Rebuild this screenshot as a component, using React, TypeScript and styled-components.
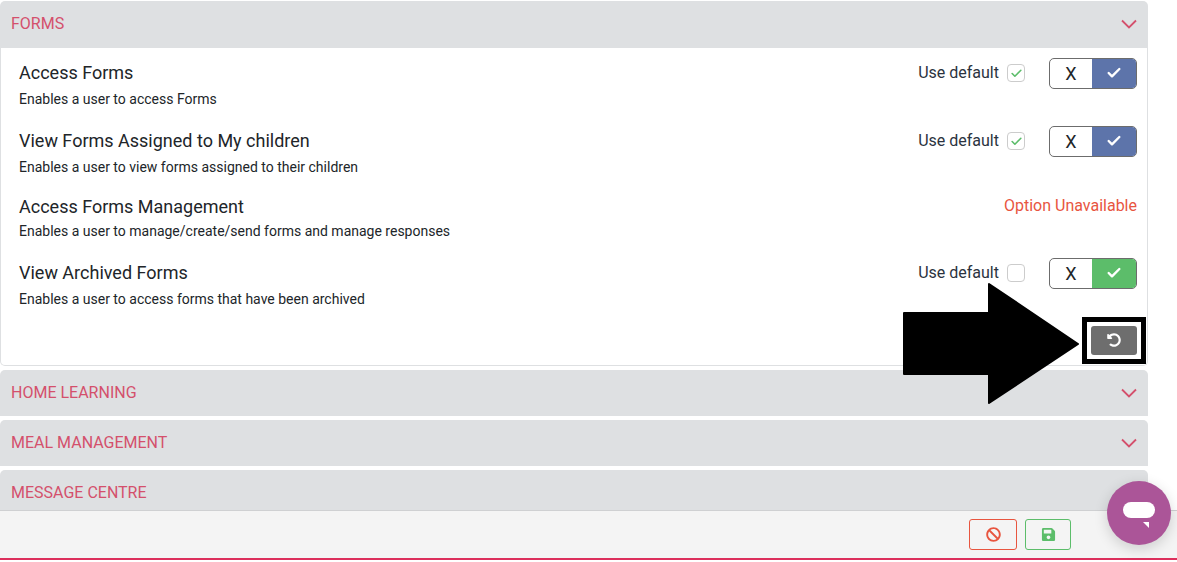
import React from "react";
import styled, { createGlobalStyle } from "styled-components";
import { FaBan, FaSave, FaUndoAlt } from "react-icons/fa";
import { Check } from "lucide-react";

const GlobalStyle = createGlobalStyle`
  html, body {
    margin: 0;
    padding: 0;
    height: 100%;
    overflow: hidden;
    background: #fff;
    font-family: Roboto, "Liberation Sans", sans-serif;
    color: #212529;
  }
`;

const Page = styled.div`
  position: relative;
  width: 1177px;
  height: 562px;
  overflow: hidden;
  display: flex;
  flex-direction: column;
`;

const Scroll = styled.div`
  flex: 1;
  min-height: 0;
  overflow: hidden;
  width: 1148px;
  padding-top: 1px;
  display: flex;
  flex-direction: column;
  gap: 4px;
`;

const Section = styled.section`
  flex: none;
`;

const Header = styled.div<{ $open?: boolean }>`
  height: ${({ $open }) => ($open ? 47 : 46)}px;
  box-sizing: border-box;
  padding: 0 11px ${({ $open }) => ($open ? 3 : 2)}px;
  display: flex;
  align-items: center;
  justify-content: space-between;
  background: #dee0e2;
  border-radius: 5px 5px 0 0;
  color: #d4506c;
  font-size: 16px;
`;

const Chevron = styled.svg`
  width: 16px;
  height: 10px;
  margin-top: 2px;
  fill: none;
  stroke: #d4506c;
  stroke-width: 1.8;
`;

const Body = styled.div`
  height: 318px;
  box-sizing: border-box;
  padding: 10px 10px 0 18px;
  border: 1px solid #dee0e2;
  border-top: none;
  border-radius: 0 0 5px 5px;
  display: flex;
  flex-direction: column;
`;

const Row = styled.div<{ $height: number }>`
  height: ${({ $height }) => $height}px;
  display: flex;
  justify-content: space-between;
`;

const Title = styled.div`
  font-size: 18px;
  line-height: 30px;
  color: #212529;
`;

const Sub = styled.div<{ $top: number }>`
  font-size: 14px;
  line-height: 20px;
  margin-top: ${({ $top }) => $top}px;
  color: #212529;
`;

const Controls = styled.div`
  display: flex;
  align-items: flex-start;
`;

const DefaultLabel = styled.span`
  font-size: 16px;
  line-height: 30px;
  margin-right: 8px;
  color: #2b3340;
`;

const Tick = styled.span`
  box-sizing: border-box;
  width: 18px;
  height: 18px;
  margin-top: 6px;
  margin-right: 24px;
  border: 1px solid #ccc;
  border-radius: 4px;
  display: flex;
  align-items: center;
  justify-content: center;
  color: #5cbd6a;
`;

const Toggle = styled.div`
  box-sizing: border-box;
  width: 88px;
  height: 31px;
  border: 1px solid #6c6c6c;
  border-radius: 5px;
  overflow: hidden;
  display: flex;
`;

const ToggleOff = styled.span`
  flex: 1;
  display: flex;
  align-items: center;
  justify-content: center;
  font-size: 18px;
  color: #212529;
`;

const ToggleOn = styled.span<{ $color: string }>`
  width: 44px;
  padding-bottom: 2px;
  display: flex;
  align-items: center;
  justify-content: center;
  background: ${({ $color }) => $color};
  color: #fff;
`;

const Unavailable = styled.span`
  font-size: 16px;
  line-height: 30px;
  margin-top: -1px;
  color: #e8553f;
`;

const ResetRow = styled.div`
  display: flex;
  justify-content: flex-end;
  margin-top: 10px;
`;

const ResetButton = styled.button`
  width: 46px;
  height: 29px;
  padding: 0 0 2px;
  border: none;
  border-radius: 3px;
  background: #6e6e6e;
  color: #fff;
  font-size: 14px;
  display: flex;
  align-items: center;
  justify-content: center;
`;

const Footer = styled.footer`
  flex: none;
  height: 50px;
  box-sizing: border-box;
  margin-bottom: 2px;
  padding: 8px 106px 0 0;
  background: #f4f4f4;
  border-top: 1px solid #cfd0d2;
  border-bottom: 2px solid #dc2f5c;
  display: flex;
  justify-content: flex-end;
  gap: 8px;
`;

const FootButton = styled.button<{ $color: string; $width: number }>`
  box-sizing: border-box;
  width: ${({ $width }) => $width}px;
  height: 31px;
  padding: 0;
  background: transparent;
  border: 1px solid ${({ $color }) => $color};
  border-radius: 3px;
  color: ${({ $color }) => $color};
  font-size: 15px;
  display: flex;
  align-items: center;
  justify-content: center;
`;

const Highlight = styled.div`
  position: absolute;
  left: 1082px;
  top: 317px;
  width: 64px;
  height: 47px;
  box-sizing: border-box;
  border: 5px solid #000;
`;

const Arrow = styled.svg`
  position: absolute;
  left: 903px;
  top: 283px;
  width: 178px;
  height: 122px;
`;

const Chat = styled.div`
  position: absolute;
  left: 1107px;
  top: 481px;
  width: 64px;
  height: 64px;
  border-radius: 50%;
  background: #ab5598;
  box-shadow: 0 4px 14px rgba(0, 0, 0, 0.16);
  display: flex;
  align-items: center;
  justify-content: center;
`;

const ChatGlyph = styled.svg`
  width: 34px;
  height: 28px;
  margin-top: 2px;
  fill: #fff;
`;

const permissions = [
  {
    title: "Access Forms",
    sub: "Enables a user to access Forms",
    height: 68,
    gap: 1,
    state: "blue",
  },
  {
    title: "View Forms Assigned to My children",
    sub: "Enables a user to view forms assigned to their children",
    height: 66,
    gap: 1,
    state: "blue",
  },
  {
    title: "Access Forms Management",
    sub: "Enables a user to manage/create/send forms and manage responses",
    height: 66,
    gap: -1,
    state: "none",
  },
  {
    title: "View Archived Forms",
    sub: "Enables a user to access forms that have been archived",
    height: 58,
    gap: 1,
    state: "green",
  },
];

const Arrowhead = () => (
  <Chevron viewBox="0 0 16 10">
    <path d="M1 1.5 L8 8.5 L15 1.5" />
  </Chevron>
);

function App() {
  return (
    <Page>
      <GlobalStyle />
      <Scroll>
        <Section>
          <Header $open>
            FORMS
            <Arrowhead />
          </Header>
          <Body>
            {permissions.map((p) => (
              <Row key={p.title} $height={p.height}>
                <div>
                  <Title>{p.title}</Title>
                  <Sub $top={p.gap}>{p.sub}</Sub>
                </div>
                {p.state === "none" ? (
                  <Unavailable>Option Unavailable</Unavailable>
                ) : (
                  <Controls>
                    <DefaultLabel>Use default</DefaultLabel>
                    <Tick>{p.state === "blue" && <Check size={13} strokeWidth={3} />}</Tick>
                    <Toggle>
                      <ToggleOff>X</ToggleOff>
                      <ToggleOn $color={p.state === "blue" ? "#5d74aa" : "#5cbd6a"}>
                        <Check size={16} strokeWidth={3.6} />
                      </ToggleOn>
                    </Toggle>
                  </Controls>
                )}
              </Row>
            ))}
            <ResetRow>
              <ResetButton>
                <FaUndoAlt />
              </ResetButton>
            </ResetRow>
          </Body>
        </Section>
        {["HOME LEARNING", "MEAL MANAGEMENT", "MESSAGE CENTRE"].map((name) => (
          <Section key={name}>
            <Header>
              {name}
              <Arrowhead />
            </Header>
          </Section>
        ))}
      </Scroll>
      <Footer>
        <FootButton $color="#e8553f" $width={48}>
          <FaBan />
        </FootButton>
        <FootButton $color="#5cbd6a" $width={46}>
          <FaSave />
        </FootButton>
      </Footer>
      <Highlight />
      <Arrow viewBox="0 0 178 122">
        <path
          d="M1 30 H86 V1 L175 61 L86 120 V91 H1 Z"
          fill="#000"
          stroke="#000"
          strokeWidth="2"
          strokeLinejoin="round"
        />
      </Arrow>
      <Chat>
        <ChatGlyph viewBox="0 0 34 28">
          <rect x="1" y="2" width="32" height="16" rx="8" />
          <path d="M21 22 H27 V28 Z" />
        </ChatGlyph>
      </Chat>
    </Page>
  );
}

export default App;
